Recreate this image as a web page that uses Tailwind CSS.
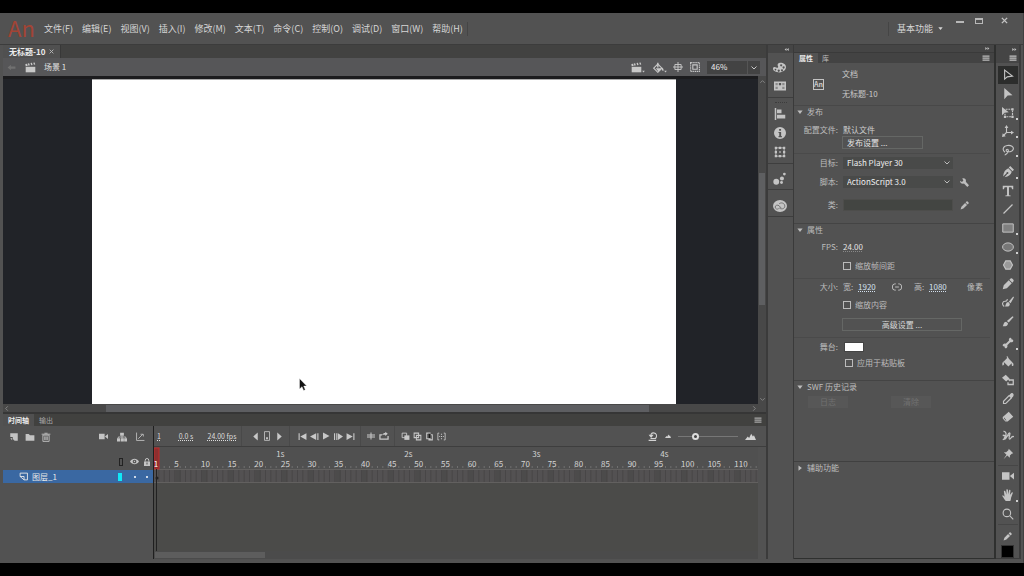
<!DOCTYPE html>
<html lang="zh-CN">
<head>
<meta charset="utf-8">
<title>无标题-10</title>
<script src="https://cdn.jsdelivr.net/npm/@tailwindcss/browser@4"></script>
</head>
<body class="flex h-screen flex-col overflow-hidden bg-black py-[13px] font-['Noto_Sans_CJK_SC',sans-serif] text-[8px] leading-3 text-[#cfcfcf]">
<svg class="hidden">
  <symbol id="clap" viewBox="0 0 16 16"><path d="M1 7h14v8H1z"/><path d="M1 6 .5 3 3 2.500l1 3zM5 5.300 4 2.300l2-.4 1 3zM9 4.600 8 1.600l2-.4 1 3zM13 4l-1-2.900 2-.4.9 2.900z"/></symbol>
  <symbol id="menu" viewBox="0 0 16 16"><path d="M1 3h14v2.500H1zM1 7h14v2.500H1zM1 11h14v2.500H1z"/></symbol>
  <symbol id="chev" viewBox="0 0 16 16"><path d="m3 5 5 5 5-5" fill="none" stroke="currentColor" stroke-width="2"/></symbol>
  <symbol id="back" viewBox="0 0 16 16"><path d="M1 8l6-5v3h8v4H7v3z"/></symbol>
  <symbol id="dbl" viewBox="0 0 16 16"><path d="M8 3v10L2 8zM15 3v10L9 8z"/></symbol>
  <symbol id="bucket" viewBox="0 0 16 16"><path d="M7.500 2 14 8.500 8.500 14 2 7.500zM6 1l1-1 3 5-1 1zM13 8c2 1 3 3 2 5-1 1-2 0-2-1z"/><path d="M2 7C0 9 0 11 1 13l2-2z"/></symbol>
  <symbol id="fillstage" viewBox="0 0 16 16"><path d="M1 9 7 3l6 6-6 6z" fill="none" stroke="currentColor" stroke-width="1.600"/><path d="M4 9h9l-5 5zM6 1h2v7H6zM13 8c2 1 3 3 2 5l-2-1z"/></symbol>
  <symbol id="center" viewBox="0 0 16 16"><path d="M3 4h10v8H3zM8 0v16M0 8h16" fill="none" stroke="currentColor" stroke-width="1.500"/></symbol>
  <symbol id="clip" viewBox="0 0 16 16"><path d="M1 1h14v14H1z" fill="none" stroke="currentColor" stroke-width="1.800" stroke-dasharray="2 1"/><path d="M4.500 4.500h7v7h-7z" fill="none" stroke="currentColor" stroke-width="1.800"/></symbol>
  <symbol id="palette" viewBox="0 0 16 16"><path fill-rule="evenodd" d="M9 2c4 0 7 2 7 5.500S12.500 14 8 14 0 12 0 9.500 2 7 4 8c2 .8 3-.5 2-2S6 2 9 2zm1 2a1.300 1.300 0 1 0 .1 0zm3 2.500a1.300 1.300 0 1 0 .1 0zM11 10a1.300 1.300 0 1 0 .1 0zM7 10.500a1.300 1.300 0 1 0 .1 0zM3 9.500a1 1 0 1 0 .1 0z"/></symbol>
  <symbol id="swatches" viewBox="0 0 16 16"><path d="M0 2h16v12H0z"/><path d="M2 4h3v3H2zM11 4h3v3h-3zM2 9h3v3H2zM11 9h3v3h-3z" fill="#8a8a8a"/><path d="M6.500 4h3v3h-3z" fill="#555"/></symbol>
  <symbol id="align" viewBox="0 0 16 16"><path d="M1 0h2v16H1zM4 2h6v5H4zM4 9h11v5H4z"/></symbol>
  <symbol id="info" viewBox="0 0 16 16"><path fill-rule="evenodd" d="M8 0a8 8 0 1 1 0 16A8 8 0 0 1 8 0zM6.800 2.500V5h2.600V2.500zM6 6.500V8h1v4H6v1.500h4.500V12h-1V6.500z"/></symbol>
  <symbol id="transform" viewBox="0 0 16 16"><path d="M2.500 2.500h11v11h-11z" fill="none" stroke="currentColor" stroke-width="1.200"/><path d="M1 1h3v3H1zM6.500 1h3v3h-3zM12 1h3v3h-3zM1 6.500h3v3H1zM12 6.500h3v3h-3zM1 12h3v3H1zM6.500 12h3v3h-3zM12 12h3v3h-3zM7 7h2v2H7z"/></symbol>
  <symbol id="motion" viewBox="0 0 16 16"><circle cx="4" cy="12" r="3.600"/><circle cx="11" cy="8" r="2.500"/><circle cx="14" cy="2.500" r="1.700"/><circle cx="10.500" cy="13" r="1.800"/></symbol>
  <symbol id="cc" viewBox="0 0 16 16"><ellipse cx="8" cy="8" rx="8" ry="6.800"/><path d="M9.500 10.500 7 7.800C5.500 6.300 2.500 7 2.500 9.200S5 12.200 6.500 11M7 5.500c2-2 6.500-1 6.500 2.700 0 3.300-4.500 4-6.500 1.800" fill="none" stroke="#707070" stroke-width="1.100"/></symbol>
  <symbol id="tri" viewBox="0 0 16 16"><path d="M1 4h14l-7 9z"/></symbol>
  <symbol id="wrench" viewBox="0 0 16 16"><path d="M0 5l3.500 2L6 4.500 4 1c5-1.500 7.500 2 6.300 5.500L16 13l-3 3-6-6.200C3.500 11 0 9 0 5z"/></symbol>
  <symbol id="pencil" viewBox="0 0 16 16"><path d="m1 15 1.500-5L9 3.500l3.500 3.500L6 13.500zM10 2.500 12.500 0 16 3.500 13.500 6z"/></symbol>
  <symbol id="link" viewBox="0 0 16 16"><path d="M6 3H4.500a4 5 0 0 0 0 10H6M10 3h1.500a4 5 0 0 1 0 10H10M5 8h6" fill="none" stroke="currentColor" stroke-width="1.600"/></symbol>
  <symbol id="sel" viewBox="0 0 16 16"><path d="M3.500 1.500v12l3.500-3 7-1z" fill="none" stroke="currentColor" stroke-width="1.500"/></symbol>
  <symbol id="sub" viewBox="0 0 16 16"><path d="M3 0v15l4.500-5 6.500-.5z"/></symbol>
  <symbol id="ftrans" viewBox="0 0 16 16"><path d="M5 3h9v10H4V9" fill="none" stroke="currentColor" stroke-width="1.500" stroke-dasharray="2.500 1"/><path d="M12.500 1.500h3v3h-3zM12.500 11.500h3v3h-3zM2.500 11.500h3v3h-3zM0 0v11l3.500-3.500 5.500-.5z"/></symbol>
  <symbol id="rot3d" viewBox="0 0 16 16"><path d="M6 2v8h8M6 10l-4 4" fill="none" stroke="currentColor" stroke-width="1.500"/><path d="M6 0l2.500 4h-5zM16 10l-4 2.500v-5zM0 16l1-5 4 4z"/></symbol>
  <symbol id="lasso" viewBox="0 0 16 16"><path d="M4 11C0 8 1 3 7 2c5-.8 9 1.500 8 5-.8 3-5 4-8 3-2-.5-2-3 0-3s2 3 0 5c-1 1.500-3 2-3 3" fill="none" stroke="currentColor" stroke-width="1.500"/></symbol>
  <symbol id="pen" viewBox="0 0 16 16"><path fill-rule="evenodd" d="M11 0l5 5-2 2-5-5zM8.500 3l4.500 4.500c-1 4-4 6-9.500 7.500L7 10.500a1.300 1.300 0 1 0-1-1L1.500 14C2 8 4.500 4.500 8.500 3z"/></symbol>
  <symbol id="text" viewBox="0 0 16 16"><path d="M1 1h14v4.500h-1.500L12.500 3H9.300v10.500l2.200.5v1h-7v-1l2.200-.5V3H3.500l-1 2.500H1z"/></symbol>
  <symbol id="line" viewBox="0 0 16 16"><path d="M2 14 14 2" stroke="currentColor" stroke-width="1.700"/></symbol>
  <symbol id="rect" viewBox="0 0 16 16"><path d="M1 2.500h14v11H1z" fill="#808080" stroke="currentColor" stroke-width="1.300"/></symbol>
  <symbol id="oval" viewBox="0 0 16 16"><ellipse cx="8" cy="8" rx="7.200" ry="5.500" fill="#777" stroke="currentColor" stroke-width="1.300"/></symbol>
  <symbol id="hex" viewBox="0 0 16 16"><path d="M5 2.500h6L14 8l-3 5.500H5L2 8z" fill="#999" stroke="currentColor" stroke-width="1.500"/></symbol>
  <symbol id="pencil2" viewBox="0 0 16 16"><path d="m1 15 1.300-5.500L9 3l4 4-6.500 6.700zM9.800 2.200 11.500.8c1-.8 2-.3 2.800.5l.6.600c.8.800 1 1.800.2 2.700L13.800 6.200z"/></symbol>
  <symbol id="brush" viewBox="0 0 16 16"><path d="M1 15c1-1 1-6 4.500-6L8 11c0 4-4 4.500-7 4zM6.500 8 14 1.500l1.500 1L9 10z"/></symbol>
  <symbol id="brush2" viewBox="0 0 16 16"><path d="M4 14c1-1 1-6 4.500-6l2 2.500c0 3.500-3.500 4-6.500 3.500zM9 7.500 15 .5l1 1-4.500 8z"/><path d="M3 14C-1 11 1 7 4 7s3-1 3-3" fill="none" stroke="currentColor" stroke-width="1.500"/></symbol>
  <symbol id="bone" viewBox="0 0 16 16"><path d="M10 1.500c1.500-1.500 3 0 2.500 1.500 2 0 3.500 2 2 3.200-1.200 1.300-3 .8-3.500.8l-4 4c.5 1 .5 2.500-.8 3.500-1.500 1.200-3-.2-2.700-2-2 .3-3.500-1.500-2-3C3 8 4.500 8.500 5 9l4.500-4.500C9 3.500 9 2.500 10 1.500z"/></symbol>
  <symbol id="ink" viewBox="0 0 16 16"><path d="M5 1l5 5-4.500 4L0 5zM9 6c2 0 2 3 1 4L8.500 8z"/><path d="M10 8h5v6H8v-3" fill="none" stroke="currentColor" stroke-width="1.700"/></symbol>
  <symbol id="eyed" viewBox="0 0 16 16"><path d="M9 4 2 11v3h3l7-7" fill="none" stroke="currentColor" stroke-width="1.500"/><path d="m8 3 2-.5C12 0 14-.5 15 1s.5 3-1.500 5L13 8z"/></symbol>
  <symbol id="eraser" viewBox="0 0 16 16"><path fill-rule="evenodd" d="M9 1l6 6.500L7.500 14H4.500L1 10V8zM3 8.500l-.5 1L5 12.500h1z"/></symbol>
  <symbol id="width" viewBox="0 0 16 16"><path d="M2 2c3-.5 4 3 3 5s-3 5-1 5 4-8 6-8-2 7 0 8 2-5 6-3M1 13C4 12 5 9 9 7M1 7l5 1" fill="none" stroke="currentColor" stroke-width="1.700"/></symbol>
  <symbol id="pin" viewBox="0 0 16 16"><path d="m9 1 6 6-2 .5-2.500 2.500v3L7 10l-5 5 4-6-3.500-3.500h3L8.500 3z"/></symbol>
  <symbol id="camera" viewBox="0 0 16 16"><path d="M0 3h10v10H0zM10.500 8 16 3.500v9z"/></symbol>
  <symbol id="hand" viewBox="0 0 16 16"><path d="M5 16c-2-2-3-5-5-7 1.500-1 2.500 0 3.500 1.500L2.500 3c1-1.200 2-.3 2.200.7L6 7.500 5.800 1c1-1.300 2-.5 2.200.5V7l1.500-5.500c1-1 2-.2 1.800 1L10.500 8 13 4.500c1.200-.6 1.800.3 1.300 1.300L12 12c0 2-.5 3-1 4z"/></symbol>
  <symbol id="zoom" viewBox="0 0 16 16"><circle cx="6.500" cy="6.500" r="5" fill="none" stroke="currentColor" stroke-width="1.500"/><path d="m10 11 1-1 4.500 4.500-1 1z"/></symbol>
  <symbol id="newl" viewBox="0 0 16 16"><path d="M2 2h12v12H9L6 11V8H2z"/><path d="M2 10h3v3z"/></symbol>
  <symbol id="folder" viewBox="0 0 16 16"><path d="M1 3h5l2 2h7v9H1z"/></symbol>
  <symbol id="trash" viewBox="0 0 16 16"><path d="M3 5h10v10H3zM1 3.500h14M5.500 2h5M6 7v6M8 7v6M10 7v6" fill="none" stroke="currentColor" stroke-width="1.400"/></symbol>
  <symbol id="tree" viewBox="0 0 16 16"><path d="M5 1h6v5H5zM0 10h5v5H0zM6 10h5v5H6zM11.500 10H16v5h-4.500z"/><path d="M8 6v4M2 10V8h12v2" fill="none" stroke="currentColor" stroke-width="1.400"/></symbol>
  <symbol id="graph" viewBox="0 0 16 16"><path d="M1 1v14h14M4 12l8-8M8 4h5v4" fill="none" stroke="currentColor" stroke-width="1.500"/></symbol>
  <symbol id="eye" viewBox="0 0 16 16"><path fill-rule="evenodd" d="M0 8c4-6.500 12-6.500 16 0-4 6.500-12 6.500-16 0zm8-3.200a3.200 3.200 0 1 0 .1 0zm0 2a1.200 1.200 0 1 1-.1 0z"/></symbol>
  <symbol id="lock" viewBox="0 0 16 16"><path fill-rule="evenodd" d="M2 7h12v9H2zm5 2v4h2V9z"/><path d="M4.500 7V4.500a3.500 3.500 0 0 1 7 0V7" fill="none" stroke="currentColor" stroke-width="2"/></symbol>
  <symbol id="layer" viewBox="0 0 16 16"><path d="M2 2h13v12H9L2 8zM2 8h7v6" fill="none" stroke="currentColor" stroke-width="1.600"/></symbol>
  <symbol id="left" viewBox="0 0 16 16"><path d="M12 1v14L4 8z"/></symbol>
  <symbol id="right" viewBox="0 0 16 16"><path d="M4 1v14l8-7z"/></symbol>
  <symbol id="frame" viewBox="0 0 16 16"><path d="M4 1h8v14H4z" fill="none" stroke="currentColor" stroke-width="1.300"/><path d="M6.500 10h3v3h-3z"/></symbol>
  <symbol id="first" viewBox="0 0 16 16"><path d="M1 2h2v12H1zM15 2v12L4 8z"/></symbol>
  <symbol id="prev" viewBox="0 0 16 16"><path d="M13 2h2v12h-2zM11 2v12L0 8z"/></symbol>
  <symbol id="play" viewBox="0 0 16 16"><path d="M2 1v14l13-7z"/></symbol>
  <symbol id="next" viewBox="0 0 16 16"><path d="M0 2h2v12H0zM4 2h2v12H4zM7 2v12l9-6z"/></symbol>
  <symbol id="last" viewBox="0 0 16 16"><path d="M13 2h2v12h-2zM1 2v12l11-6z"/></symbol>
  <symbol id="cframe" viewBox="0 0 16 16"><path d="M8 1v14M0 6h16M0 10h16" fill="none" stroke="currentColor" stroke-width="2"/></symbol>
  <symbol id="loop" viewBox="0 0 16 16"><path d="M5 6H1.500v7h13V8" fill="none" stroke="currentColor" stroke-width="2"/><path d="M5 6c1-2 3-3 5-3V1l4 3.500L10 8V6z"/></symbol>
  <symbol id="onion" viewBox="0 0 16 16"><path d="M2 2h8v8H2z" fill="none" stroke="currentColor" stroke-width="1.600"/><path d="M6 6h9v8H6z"/></symbol>
  <symbol id="onion2" viewBox="0 0 16 16"><path d="M2 2h8v8H2zM6 6h8v8H6z" fill="none" stroke="currentColor" stroke-width="1.800"/></symbol>
  <symbol id="multi" viewBox="0 0 16 16"><path d="M3 2h6v10H3zM7 5h6v9H7z" fill="none" stroke="currentColor" stroke-width="1.800"/><path fill="#1b1b1b" d="M6 3h4v8H6z"/></symbol>
  <symbol id="range" viewBox="0 0 16 16"><path d="M4 2H1.500v12H4M12 2h2.500v12H12" fill="none" stroke="currentColor" stroke-width="1.500"/><path d="M7 3h2v2H7zM7 7h2v2H7zM7 11h2v2H7zM4 7h1.500v2H4zM10.500 7H12v2h-1.500z"/></symbol>
  <symbol id="reset" viewBox="0 0 16 16"><path d="M4 12h8c3-3 2-9-3-9-4 0-5 3-4 6M1 15h12" fill="none" stroke="currentColor" stroke-width="1.700"/><path d="M1 6h8l-4 5z"/></symbol>
  <symbol id="mount" viewBox="0 0 16 16"><path d="M0 13 4 8l2 2 3-6 2.500 4L13 6l3 7z"/></symbol>
</svg>

<div class="flex min-h-0 flex-1 flex-col border-r border-[#404040] bg-[#525252] pb-1">
  <!-- menu bar -->
  <header class="flex h-8 shrink-0 items-center border-b border-[#3c3c3c] pl-2 text-[9px] text-[#d6d6d6]">
    <div class="mb-1 w-9 text-[22px] leading-6 text-[#a34435]">An</div>
    <nav class="flex items-center gap-[9px] whitespace-nowrap">
      <button>文件(F)</button><button>编辑(E)</button><button>视图(V)</button><button>插入(I)</button><button>修改(M)</button><button>文本(T)</button><button>命令(C)</button><button>控制(O)</button><button>调试(D)</button><button>窗口(W)</button><button>帮助(H)</button>
    </nav>
    <div class="ml-1 h-[14px] w-px bg-[#454545]"></div>
    <div class="ml-auto h-[14px] w-px bg-[#454545]"></div>
    <button class="ml-2 flex items-center gap-[5px]">基本功能<svg class="size-[5px]" fill="currentColor"><use href="#tri"/></svg></button>
    <div class="mr-[15px] ml-[13px] flex items-start gap-[15px] self-start pt-1">
      <button aria-label="最小化" class="flex h-2 w-2 items-end"><span class="mb-[2px] h-[2px] w-full bg-[#b8b8b8]"></span></button>
      <button aria-label="最大化" class="mt-px mr-[3px] -ml-1 h-[6px] w-2 border border-t-2 border-[#b8b8b8]"></button>
      <button aria-label="关闭"><svg class="size-[7px]" viewBox="0 0 8 8" fill="none" stroke="#c4c4c4" stroke-width="1.600"><path d="m1 1 6 6M7 1 1 7"/></svg></button>
    </div>
  </header>

  <div class="flex min-h-0 flex-1">
    <!-- document and timeline -->
    <main class="flex min-w-0 flex-1 flex-col border-r-2 border-[#3b3b3b] pl-[3px]">
      <div class="flex h-[13px] shrink-0 bg-[#424241]">
        <div class="flex items-center gap-1 border-r border-[#383838] bg-[#505050] pr-[6px] pl-[6px] font-bold text-[#ececec]">无标题-10<button aria-label="关闭标签"><svg class="size-[5px]" viewBox="0 0 8 8" fill="none" stroke="#b5b5b5" stroke-width="1.500"><path d="m1 1 6 6M7 1 1 7"/></svg></button></div>
      </div>
      <div class="flex h-[18px] shrink-0 items-center bg-[#565658] pl-1 text-[#c8c8c8]">
        <button aria-label="后退"><svg class="size-[9px] text-[#707070]" fill="currentColor"><use href="#back"/></svg></button>
        <svg class="ml-[9px] size-[11px]" fill="currentColor"><use href="#clap"/></svg>
        <span class="ml-2 text-[8px] text-[#e0e0e0]">场景 1</span>
        <div class="mr-[6px] ml-auto flex items-center">
          <button aria-label="编辑场景" class="flex items-end"><svg class="size-[11px]" fill="currentColor"><use href="#clap"/></svg><svg class="size-[3px]" fill="currentColor"><use href="#tri"/></svg></button>
          <button aria-label="编辑元件" class="ml-2 flex items-end"><svg class="size-[11px]" fill="currentColor"><use href="#fillstage"/></svg><svg class="size-[3px]" fill="currentColor"><use href="#tri"/></svg></button>
          <button aria-label="舞台居中" class="ml-[6px]"><svg class="size-[10px]" fill="currentColor"><use href="#center"/></svg></button>
          <button aria-label="剪切" class="ml-[7px]"><svg class="size-[10px]" fill="currentColor"><use href="#clip"/></svg></button>
          <label class="relative ml-[7px] block w-[53px]"><select aria-label="缩放" class="block h-[13px] w-full appearance-none bg-[#434343] pl-1 text-[#eee]"><option>46%</option></select><svg class="pointer-events-none absolute top-[3px] right-[2px] size-2"><use href="#chev"/></svg><span class="absolute top-0 right-3 h-full w-px bg-[#555]"></span></label>
        </div>
      </div>
      <div class="flex min-h-0 flex-1">
        <div class="flex min-w-0 flex-1 border-t-3 border-[#1c1c1e] bg-[#212328]">
          <div class="mr-[82px] ml-[89px] flex-1 border-t border-[#aaa] bg-white"></div>
        </div>
        <div class="flex w-2 flex-col items-center bg-[#484848] text-[#8a8a8a]">
          <svg class="mt-[2px] size-[7px] rotate-180"><use href="#chev"/></svg>
          <div class="mt-[88px] h-[132px] w-[6px] bg-[#5e5f61]"></div>
          <svg class="mt-auto mb-px size-[7px]"><use href="#chev"/></svg>
        </div>
      </div>
      <div class="flex h-2 shrink-0 items-center bg-[#484848] pr-2 text-[#8a8a8a]">
        <svg class="size-[7px] rotate-90"><use href="#chev"/></svg>
        <div class="mr-[102px] ml-24 h-[7px] flex-1 bg-[#5d5e61]"></div>
        <svg class="size-[7px] -rotate-90"><use href="#chev"/></svg>
      </div>

      <section class="flex h-[147px] shrink-0 flex-col border-t-2 border-[#363636]">
        <div class="flex h-[12px] shrink-0 items-center bg-[#41413f] text-[#a8a8a8]">
          <button class="h-full bg-[#505050] px-[5px] text-[7px] font-bold text-[#ececec]">时间轴</button><button class="ml-[5px] text-[7px]">输出</button>
          <button aria-label="时间轴菜单" class="mr-1 ml-auto"><svg class="size-2" fill="currentColor"><use href="#menu"/></svg></button>
        </div>
        <div class="flex min-h-0 flex-1">
          <div class="flex w-[151px] shrink-0 flex-col border-r border-[#1f1f1f] text-[#c4c4c4]">
            <div class="flex h-[21px] items-center gap-[6px] pl-[6px]">
              <button aria-label="新建图层"><svg class="size-[10px]" fill="currentColor"><use href="#newl"/></svg></button>
              <button aria-label="新建文件夹"><svg class="size-[10px]" fill="currentColor"><use href="#folder"/></svg></button>
              <button aria-label="删除"><svg class="size-[10px]" fill="currentColor"><use href="#trash"/></svg></button>
              <div class="mr-2 ml-auto flex gap-[9px]">
                <button aria-label="摄像头"><svg class="size-[9px]" fill="currentColor"><use href="#camera"/></svg></button>
                <button aria-label="父级视图"><svg class="size-[10px]" fill="currentColor"><use href="#tree"/></svg></button>
                <button aria-label="图层深度"><svg class="size-[9px]" fill="currentColor"><use href="#graph"/></svg></button>
              </div>
            </div>
            <div class="flex h-[23px] items-center justify-end gap-1 pt-[6px] pr-[2px]">
              <button aria-label="轮廓" class="mr-[3px] h-2 w-1 border border-[#222]"></button>
              <button aria-label="显示"><svg class="size-[9px]" fill="currentColor"><use href="#eye"/></svg></button>
              <button aria-label="锁定"><svg class="size-2" fill="currentColor"><use href="#lock"/></svg></button>
            </div>
            <div class="flex h-[13px] items-center bg-[#3a68a2] pr-[5px] pl-4 text-[8px] text-[#e8e8e8]">
              <svg class="size-[9px]"><use href="#layer"/></svg><span class="ml-1">图层_1</span>
              <span class="mr-3 ml-auto h-2 w-1 bg-[#10e8f8]"></span><span class="mr-[10px] size-[2px] rounded-full bg-white"></span><span class="size-[2px] rounded-full bg-white"></span>
            </div>
          </div>
          <div class="flex min-w-0 flex-1 flex-col">
            <div class="flex h-[21px] shrink-0 items-center border-b border-[#3e3e3e] text-[7px] text-[#dcdcdc]">
              <input aria-label="当前帧" value="1" class="w-[10px] text-center underline decoration-dotted">
              <input aria-label="运行时间" value="0.0 s" class="ml-[7px] w-[30px] text-center underline decoration-dotted">
              <input aria-label="帧速率" value="24.00 fps" class="ml-1 w-[34px] text-center underline decoration-dotted">
              <div class="mr-[7px] ml-[2px] h-full w-px bg-[#494949]"></div>
              <div class="flex text-[#c8c8c8] *:flex *:w-3 *:items-center *:justify-center">
                <button aria-label="上一关键帧"><svg class="size-[9px]" fill="currentColor"><use href="#left"/></svg></button>
                <button aria-label="插入关键帧"><svg class="size-[10px]" fill="currentColor"><use href="#frame"/></svg></button>
                <button aria-label="下一关键帧"><svg class="size-[9px]" fill="currentColor"><use href="#right"/></svg></button>
              </div>
              <div class="mr-[6px] ml-1 h-full w-px bg-[#494949]"></div>
              <div class="flex text-[#c8c8c8] *:flex *:w-3 *:items-center *:justify-center">
                <button aria-label="第一帧"><svg class="size-[9px]" fill="currentColor"><use href="#first"/></svg></button>
                <button aria-label="后退一帧"><svg class="size-[9px]" fill="currentColor"><use href="#prev"/></svg></button>
                <button aria-label="播放"><svg class="size-[8px]" fill="currentColor"><use href="#play"/></svg></button>
                <button aria-label="前进一帧"><svg class="size-[9px]" fill="currentColor"><use href="#next"/></svg></button>
                <button aria-label="最后一帧"><svg class="size-[9px]" fill="currentColor"><use href="#last"/></svg></button>
              </div>
              <div class="mr-[3px] ml-1 h-full w-px bg-[#494949]"></div>
              <div class="flex text-[#c8c8c8] *:flex *:w-[13px] *:items-center *:justify-center">
                <button aria-label="帧居中"><svg class="size-2" fill="currentColor"><use href="#cframe"/></svg></button>
                <button aria-label="循环"><svg class="size-[10px]" fill="currentColor"><use href="#loop"/></svg></button>
              </div>
              <div class="mx-1 h-full w-px bg-[#494949]"></div>
              <div class="flex text-[#c8c8c8] *:flex *:w-3 *:items-center *:justify-center">
                <button aria-label="绘图纸外观"><svg class="size-[9px]" fill="currentColor"><use href="#onion"/></svg></button>
                <button aria-label="绘图纸外观轮廓"><svg class="size-[9px]" fill="currentColor"><use href="#onion2"/></svg></button>
                <button aria-label="编辑多个帧"><svg class="size-[9px]" fill="currentColor"><use href="#multi"/></svg></button>
                <button aria-label="修改标记"><svg class="size-[9px]" fill="currentColor"><use href="#range"/></svg></button>
              </div>
              <div class="mr-[10px] ml-auto flex items-center text-[#d2d2d2]">
                <button aria-label="重置缩放"><svg class="size-[10px]" fill="currentColor"><use href="#reset"/></svg></button>
                <svg class="ml-[7px] size-[6px]" fill="currentColor"><use href="#mount"/></svg>
                <input type="range" aria-label="时间轴缩放" min="0" max="100" value="26" class="mx-[7px] h-2 w-[60px] appearance-none bg-[linear-gradient(#777,#777)] bg-size-[100%_1px] bg-center bg-no-repeat [&::-webkit-slider-thumb]:size-[7px] [&::-webkit-slider-thumb]:appearance-none [&::-webkit-slider-thumb]:rounded-full [&::-webkit-slider-thumb]:border-2 [&::-webkit-slider-thumb]:border-[#dcdcdc] [&::-webkit-slider-thumb]:bg-[#444]">
                <svg class="size-[11px]" fill="currentColor"><use href="#mount"/></svg>
              </div>
            </div>
            <div class="mr-2 flex min-h-0 flex-1 flex-col bg-[#4b4b49]">
              <svg id="ruler" class="w-full" height="112" role="img" aria-label="时间轴标尺"></svg>
            </div>
          </div>
        </div>
      </section>
    </main>

    <!-- collapsed panels -->
    <aside class="flex w-[26px] shrink-0 flex-col border-r border-[#3a3a3a] text-[#c4c4c4]">
      <div class="flex h-2 shrink-0 items-center justify-end bg-[#454545] pr-1"><svg class="size-[5px]" fill="currentColor"><use href="#dbl"/></svg></div>
      <div class="flex flex-col items-center gap-[6px] border-b border-[#3e3e3e] pt-2 pr-[2px] pb-[5px]">
        <button aria-label="颜色"><svg class="size-[13px]" fill="currentColor"><use href="#palette"/></svg></button>
        <button aria-label="样本"><svg class="size-3" fill="currentColor"><use href="#swatches"/></svg></button>
      </div>
      <div class="mx-auto mt-1 w-3 border-t border-dotted border-[#3c3c3c]"></div>
      <div class="flex flex-col items-center gap-[7px] border-b border-[#3e3e3e] pt-[5px] pr-[2px] pb-[5px]">
        <button aria-label="对齐"><svg class="size-3" fill="currentColor"><use href="#align"/></svg></button>
        <button aria-label="信息"><svg class="size-3" fill="currentColor"><use href="#info"/></svg></button>
        <button aria-label="变形"><svg class="size-3" fill="currentColor"><use href="#transform"/></svg></button>
      </div>
      <div class="flex justify-center border-b border-[#3e3e3e] pt-2 pr-[2px] pb-1"><button aria-label="动画预设"><svg class="size-[13px]" fill="currentColor"><use href="#motion"/></svg></button></div>
      <div class="flex justify-center border-b border-[#3e3e3e] pt-[9px] pr-[2px] pb-[3px]"><button aria-label="CC 库"><svg class="size-[14px]" fill="currentColor"><use href="#cc"/></svg></button></div>
    </aside>

    <!-- properties -->
    <aside class="flex w-[202px] shrink-0 flex-col border-r-2 border-b border-[#2f302f] text-[#bdbdbd]">
      <div class="flex h-2 shrink-0 items-center justify-end border-b border-[#3a3a3a] bg-[#454545] pr-1"><svg class="size-[5px] rotate-180" fill="currentColor"><use href="#dbl"/></svg></div>
      <div class="flex h-[10px] shrink-0 items-center bg-[#434343] text-[7px]">
        <button class="h-full bg-[#525252] px-[5px] leading-[10px] font-bold text-[#e8e8e8]">属性</button><button class="ml-1 leading-[10px]">库</button>
        <button aria-label="面板菜单" class="mr-1 ml-auto"><svg class="size-2" fill="currentColor"><use href="#menu"/></svg></button>
      </div>
      <div class="flex h-[43px] shrink-0 items-center border-b border-[#484848] pl-[19px] text-[#c8c8c8]">
        <div class="flex size-[11px] items-center justify-center border border-[#c4c4c4] text-[7px] font-bold">An</div>
        <div class="ml-[18px] flex flex-col gap-2"><div>文档</div><div>无标题-10</div></div>
      </div>
      <button class="flex h-3 items-center gap-1 pl-[3px]"><svg class="size-[6px]" fill="currentColor"><use href="#tri"/></svg>发布</button>
      <div class="mr-1 border-b border-[#4a4a4a] pt-[5px] pb-1">
        <div class="flex h-[13px] items-center"><span class="mr-[5px] w-11 text-right whitespace-nowrap">配置文件:</span><span class="text-[#cfcfcf]">默认文件</span></div>
        <button class="ml-12 block h-[13px] w-[81px] border border-[#656765] pl-1 text-left leading-[11px] text-[#e4e4e4]">发布设置 ...</button>
      </div>
      <div class="flex flex-col gap-[7px] border-b border-[#444] pt-[3px] pb-3">
        <div class="flex h-3 items-center"><label for="target" class="mr-[5px] w-11 text-right">目标:</label><div class="relative w-[110px]"><select id="target" class="block h-3 w-full appearance-none bg-[#494a49] pl-1 text-[#eee]"><option>Flash Player 30</option></select><svg class="pointer-events-none absolute top-[2px] right-[2px] size-2"><use href="#chev"/></svg></div></div>
        <div class="flex h-3 items-center"><label for="script" class="mr-[5px] w-11 text-right">脚本:</label><div class="relative w-[110px]"><select id="script" class="block h-3 w-full appearance-none bg-[#494a49] pl-1 text-[#eee]"><option>ActionScript 3.0</option></select><svg class="pointer-events-none absolute top-[2px] right-[2px] size-2"><use href="#chev"/></svg></div><button aria-label="脚本设置" class="ml-[7px]"><svg class="size-[9px]" fill="currentColor"><use href="#wrench"/></svg></button></div>
        <div class="mt-1 flex h-3 items-center"><label for="cls" class="mr-[5px] w-11 text-right">类:</label><input id="cls" class="h-3 w-[110px] border border-[#4d4d4b] bg-[#434542]"><button aria-label="编辑类" class="ml-[7px]"><svg class="size-[9px]" fill="currentColor"><use href="#pencil"/></svg></button></div>
      </div>
      <button class="flex h-3 items-center gap-1 pl-[3px]"><svg class="size-[6px]" fill="currentColor"><use href="#tri"/></svg>属性</button>
      <div class="mr-1 flex flex-col gap-[7px] border-b border-[#4a4a4a] pt-[5px] pb-[6px]">
        <div class="flex h-3 items-center"><label for="fps" class="mr-[5px] w-11 text-right">FPS:</label><input id="fps" value="24.00" class="w-6 text-[#e4e4e4] underline decoration-[#888] decoration-dotted"></div>
        <label class="ml-[49px] flex h-3 items-center gap-1"><input type="checkbox" class="size-2 appearance-none border border-[#bbb]">缩放帧间距</label>
      </div>
      <div class="mr-1 flex flex-col gap-[6px] border-b border-[#4a4a4a] pt-[2px] pb-[6px]">
        <div class="flex h-3 items-center"><span class="mr-[5px] w-11 text-right">大小:</span><label for="w" class="w-[15px]">宽:</label><input id="w" value="1920" class="w-[22px] text-[#d3e0ee] underline decoration-dotted"><button aria-label="链接" class="mx-3"><svg class="size-[10px]"><use href="#link"/></svg></button><label for="h" class="w-[15px]">高:</label><input id="h" value="1080" class="w-[22px] text-[#d3e0ee] underline decoration-dotted"><span class="mr-[7px] ml-auto">像素</span></div>
        <label class="ml-[49px] flex h-3 items-center gap-1"><input type="checkbox" class="size-2 appearance-none border border-[#bbb]">缩放内容</label>
        <button class="mt-px ml-12 block h-[13px] w-[120px] border border-[#656765] leading-[11px] text-[#d8d8d8]">高级设置 ...</button>
      </div>
      <div class="flex flex-col gap-1 border-b border-[#444] pt-[3px] pb-[11px]">
        <div class="flex h-3 items-center"><span class="mr-[6px] w-11 text-right">舞台:</span><button aria-label="舞台颜色" class="h-[10px] w-5 border border-[#444] bg-white"></button></div>
        <label class="ml-[51px] flex h-3 items-center gap-1"><input type="checkbox" class="size-2 appearance-none border border-[#bbb]">应用于粘贴板</label>
      </div>
      <button class="flex h-3 items-center gap-1 pl-[3px]"><svg class="size-[6px]" fill="currentColor"><use href="#tri"/></svg>SWF 历史记录</button>
      <div class="flex gap-[43px] border-b border-[#404040] pt-[3px] pb-[53px] pl-[14px] text-[#717171]">
        <button class="h-3 w-10 bg-[#575757]" disabled>日志</button><button class="h-3 w-10 bg-[#575757]" disabled>清除</button>
      </div>
      <button class="flex h-3 items-center gap-1 pl-[3px]"><svg class="size-[6px] -rotate-90" fill="currentColor"><use href="#tri"/></svg>辅助功能</button>
    </aside>

    <!-- tools -->
    <aside class="mr-[2px] flex w-[25px] shrink-0 flex-col border-r-2 border-b border-[#3c3c3c] text-[#c4c4c4]">
      <div class="flex h-2 shrink-0 items-center justify-end bg-[#454545] pr-[2px]"><svg class="size-[5px] rotate-180" fill="currentColor"><use href="#dbl"/></svg></div>
      <div class="flex h-[10px] shrink-0 items-center justify-end bg-[#454545] pr-[2px]"><button aria-label="工具菜单"><svg class="size-2" fill="currentColor"><use href="#menu"/></svg></button></div>
      <div id="tools" class="flex flex-col items-center pt-[3px]"></div>
      <div class="mx-auto flex flex-col items-center gap-1 pt-[7px]">
        <button aria-label="笔触颜色"><svg class="size-[9px]" fill="currentColor"><use href="#pencil"/></svg></button>
        <button aria-label="黑色" class="size-[13px] border border-[#333] bg-black"></button>
      </div>
    </aside>
  </div>
</div>

<svg class="absolute top-[378px] left-[299px] h-[13px] w-2" viewBox="0 0 8 13"><path d="M.5.5v10.500l2.500-2.300 1.600 3.800 1.700-.7-1.600-3.700h3z" fill="#111" stroke="#fff" stroke-width=".4"/></svg>

<script>
  // toolbox: groups of [symbol, label, has submenu]
  const groups = [
    ['h-[93px] mb-1', [['sel','选择'],['sub','部分选取'],['ftrans','任意变形',1],['rot3d','3D 旋转',1],['lasso','套索',1]]],
    ['h-[167px] mb-1', [['pen','钢笔',1],['text','文本'],['line','线条'],['rect','矩形',1],['oval','椭圆',1],['hex','多角星形'],['pencil2','铅笔'],['brush2','画笔'],['brush','传统画笔']]],
    ['h-[129px] mb-[2px]', [['bone','骨骼',1],['bucket','颜料桶'],['ink','墨水瓶'],['eyed','滴管'],['eraser','橡皮擦'],['width','宽度'],['pin','资源变形']]],
    ['h-[60px] border-y border-[#464646] py-px', [['camera','摄像头'],['hand','手形',1],['zoom','缩放']]]
  ];
  document.getElementById('tools').innerHTML = groups.map(([cls, items]) =>
    `<div class="${cls} flex flex-col items-center justify-between">` + items.map(([id, name, more]) =>
      `<button aria-label="${name}" class="relative flex h-[18px] w-[20px] items-center justify-center ${id === 'sel' ? 'bg-[#2c2d2c]' : ''}"><svg class="size-3" fill="currentColor"><use href="#${id}"/></svg>${more ? '<span class="absolute right-0 bottom-[2px] size-[2px] bg-[#d0d0d0]"></span>' : ''}</button>`
    ).join('') + '</div>').join('');

  // timeline ruler: frame n starts at (n - 1) * step
  const step = 16 / 3, count = 113;
  let s = '<rect width="100%" height="22" fill="#505050"/><rect y="22" width="100%" height="14" fill="#535152"/>';
  for (let n = 1; n <= count; n++) {
    const x = (n - 1) * step;
    if (n % 5 === 0) s += `<rect x="${x}" y="23" width="${step}" height="12" fill="#4c4b4b"/>`;
    s += `<rect x="${x + step - 1}" y="23" width="1" height="12" fill="#484647"/><rect x="${x + step - 1}" y="19" width="1" height="2" fill="#707070"/>`;
    if (n % 5 === 0) s += `<text x="${x - 1}" y="20" fill="#d4d4d4">${n}</text>`;
    if (n % 24 === 0) s += `<text x="${x + step / 2 + 1}" y="10" text-anchor="middle" fill="#d4d4d4">${n / 24}s</text>`;
  }
  s += '<path d="M0 22.500h604M0 35.500h604" stroke="#62605f" stroke-width="1"/>';
  s += '<rect x="0" y="1" width="5" height="21" fill="#8c2f2f" stroke="#c02a2a"/><text x="2" y="20" text-anchor="middle" fill="#fff">1</text><circle cx="3" cy="31" r="1.500" fill="#222"/><path d="M2.500 22v82" stroke="#222"/>';
  s += '<rect x="0" y="104" width="100%" height="8" fill="#4b4b4b"/><rect x="1" y="105" width="110" height="6" fill="#5d5d5d"/>';
  const ruler = document.getElementById('ruler');
  ruler.setAttribute('font-size', '8');
  ruler.innerHTML = s;
</script>
</body>
</html>
